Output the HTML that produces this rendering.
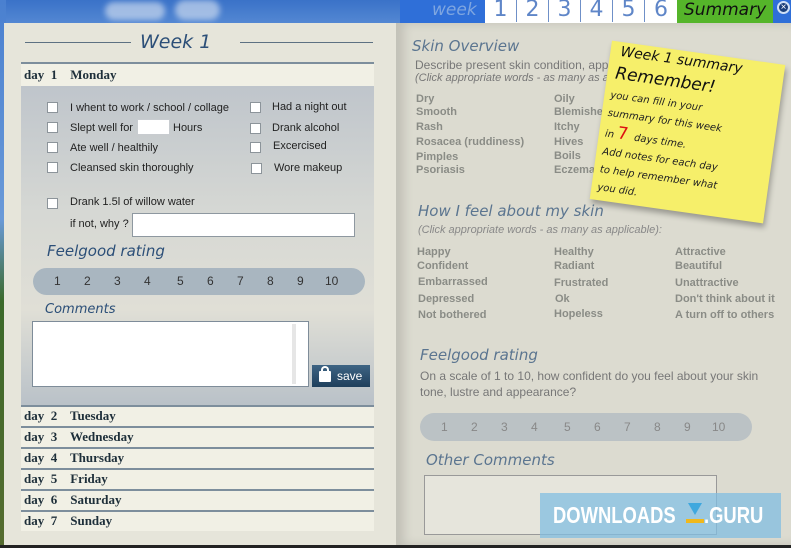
<!DOCTYPE html>
<html><head><meta charset="utf-8"><style>
*{margin:0;padding:0;box-sizing:border-box}
body{width:791px;height:548px;overflow:hidden;position:relative;font-family:"Liberation Sans",sans-serif;background:#2a2a2a}
.a{position:absolute}
.hand{font-family:"DejaVu Sans",sans-serif;font-style:italic;color:#2c4f78}
.sf{font-family:"Liberation Serif",serif;font-weight:bold;color:#1e2f3a;font-size:13px}
.cb{position:absolute;width:11px;height:11px;background:#fff;border:1px solid #8c949a}
.lt{position:absolute;font-size:11px;color:#222}
.w{position:absolute;font-size:11px;font-weight:bold;color:#8a8c86}
.row{position:absolute;left:21px;width:353px;height:21px;background:#f1f0e5;border-top:2px solid #7d8e9c}
.row span{position:absolute;top:1px}
</style></head><body>
<div class="a" style="left:0;top:0;width:791px;height:30px;background:linear-gradient(#3a72c8,#5b8ed6)"></div>
<div class="a" style="left:0;top:0;width:6px;height:548px;background:linear-gradient(#4a80d0,#6a9ad8 40%,#3b6a2a 55%,#556b2f)"></div>
<div class="a" style="left:105px;top:2px;width:60px;height:18px;background:#dfe8f4;border-radius:10px;opacity:.6;filter:blur(3px)"></div>
<div class="a" style="left:175px;top:0;width:45px;height:20px;background:#dfe8f4;border-radius:10px;opacity:.6;filter:blur(3px)"></div>
<!-- book -->
<div class="a" style="left:4px;top:23px;width:392px;height:522px;background:#e6e5da"></div>
<div class="a" style="left:396px;top:23px;width:395px;height:522px;background:#dcdbd0;box-shadow:inset 8px 0 10px rgba(0,0,0,.12)"></div>
<div class="a" style="left:0;top:545px;width:791px;height:3px;background:#222"></div>
<!-- tabs -->
<div class="a" style="left:400px;top:0;width:391px;height:23px;background:#2f6fd8"></div>
<div class="a hand" style="left:432px;top:0;font-size:17px;color:#7fa6e0">week</div>
<div class="a" style="left:485px;top:0;width:192px;height:23px;background:#fff"></div>
<div class="a hand" style="left:485px;top:-3px;width:192px;font-size:22px;font-style:normal;color:#5f86c8;display:flex">
<span style="width:32px;text-align:center;border-right:1px solid #6f90c8">1</span><span style="width:32px;text-align:center;border-right:1px solid #6f90c8">2</span><span style="width:32px;text-align:center;border-right:1px solid #6f90c8">3</span><span style="width:32px;text-align:center;border-right:1px solid #6f90c8">4</span><span style="width:32px;text-align:center;border-right:1px solid #6f90c8">5</span><span style="width:32px;text-align:center">6</span></div>
<div class="a" style="left:677px;top:0;width:96px;height:23px;background:#55b52a"></div>
<div class="a hand" style="left:684px;top:0;font-size:17px;color:#111">Summary</div>
<div class="a" style="left:777px;top:1px;width:13px;height:13px;border-radius:50%;background:#1a3f7a;border:2px solid #cfe0f5;color:#fff;font-size:10px;line-height:9px;text-align:center">×</div>
<!-- left page -->
<div class="a" style="left:25px;top:42px;width:106px;height:1px;background:#5d7182"></div>
<div class="a" style="left:240px;top:42px;width:133px;height:1px;background:#5d7182"></div>
<div class="a hand" style="left:140px;top:31px;font-size:19px">Week 1</div>
<div class="a" style="left:21px;top:62px;width:353px;height:24px;background:#f1f0e5;border-top:2px solid #7d8e9c"></div>
<div class="a sf" style="left:24px;top:67px">day&nbsp; 1&nbsp;&nbsp;&nbsp; Monday</div>
<div class="a" style="left:21px;top:86px;width:353px;height:320px;background:linear-gradient(#bfc5cb,#d6d8d4 40%,#e0dfd6 70%,#b9c1c8)"></div>
<div class="cb" style="left:47px;top:102px"></div><div class="lt" style="left:70px;top:102px">I whent to work / school / collage</div>
<div class="cb" style="left:47px;top:122px"></div><div class="lt" style="left:70px;top:122px">Slept well for</div>
<div class="a" style="left:137px;top:119px;width:33px;height:16px;background:#fff;border:1px solid #c8ccd0"></div><div class="lt" style="left:173px;top:122px">Hours</div>
<div class="cb" style="left:47px;top:142px"></div><div class="lt" style="left:70px;top:142px">Ate well / healthily</div>
<div class="cb" style="left:47px;top:162px"></div><div class="lt" style="left:70px;top:162px">Cleansed skin thoroughly</div>
<div class="cb" style="left:250px;top:102px"></div><div class="lt" style="left:272px;top:101px">Had a night out</div>
<div class="cb" style="left:250px;top:123px"></div><div class="lt" style="left:272px;top:122px">Drank alcohol</div>
<div class="cb" style="left:250px;top:142px"></div><div class="lt" style="left:273px;top:140px">Excercised</div>
<div class="cb" style="left:251px;top:163px"></div><div class="lt" style="left:274px;top:162px">Wore makeup</div>
<div class="cb" style="left:47px;top:198px"></div><div class="lt" style="left:70px;top:196px">Drank 1.5l of willow water</div>
<div class="lt" style="left:70px;top:218px">if not, why ?</div>
<div class="a" style="left:132px;top:213px;width:223px;height:24px;background:#fff;border:1px solid #8e98a0"></div>
<div class="a hand" style="left:47px;top:242px;font-size:15px">Feelgood rating</div>
<div class="a" style="left:33px;top:268px;width:332px;height:27px;border-radius:14px;background:#a9b6c0"></div>
<div class="a" style="left:33px;top:274px;width:332px;font-size:12px;color:#333"><span class="a" style="left:21px">1</span><span class="a" style="left:51px">2</span><span class="a" style="left:81px">3</span><span class="a" style="left:111px">4</span><span class="a" style="left:144px">5</span><span class="a" style="left:174px">6</span><span class="a" style="left:204px">7</span><span class="a" style="left:234px">8</span><span class="a" style="left:264px">9</span><span class="a" style="left:292px">10</span></div>
<div class="a hand" style="left:45px;top:302px;font-size:13px">Comments</div>
<div class="a" style="left:32px;top:321px;width:277px;height:66px;background:#fff;border:1px solid #7e8c99"></div>
<div class="a" style="left:292px;top:324px;width:4px;height:60px;background:#e6e6e6"></div>
<div class="a" style="left:312px;top:365px;width:58px;height:22px;background:linear-gradient(#3e6484,#1f3f5c)"></div>
<div class="a" style="left:319px;top:371px;width:12px;height:11px;background:#fff;border-radius:1px"></div>
<div class="a" style="left:321px;top:366px;width:8px;height:8px;border:2px solid #fff;border-bottom:none;border-radius:4px 4px 0 0"></div>
<div class="a" style="left:337px;top:369px;color:#fff;font-size:12px">save</div>
<div class="row" style="top:405px"><span class="sf" style="left:3px">day&nbsp; 2&nbsp;&nbsp;&nbsp; Tuesday</span></div>
<div class="row" style="top:426px"><span class="sf" style="left:3px">day&nbsp; 3&nbsp;&nbsp;&nbsp; Wednesday</span></div>
<div class="row" style="top:447px"><span class="sf" style="left:3px">day&nbsp; 4&nbsp;&nbsp;&nbsp; Thursday</span></div>
<div class="row" style="top:468px"><span class="sf" style="left:3px">day&nbsp; 5&nbsp;&nbsp;&nbsp; Friday</span></div>
<div class="row" style="top:489px"><span class="sf" style="left:3px">day&nbsp; 6&nbsp;&nbsp;&nbsp; Saturday</span></div>
<div class="row" style="top:510px;height:21px"><span class="sf" style="left:3px">day&nbsp; 7&nbsp;&nbsp;&nbsp; Sunday</span></div>
<!-- right page -->
<div class="a hand" style="left:412px;top:37px;font-size:15px;color:#5b7590">Skin Overview</div>
<div class="a" style="left:415px;top:58px;font-size:12px;color:#777">Describe present skin condition, appearance and problem areas:</div>
<div class="a" style="left:415px;top:72px;font-size:11px;font-style:italic;color:#777">(Click appropriate words - as many as applicable):</div>
<div class="w" style="left:416px;top:93px">Dry</div><div class="w" style="left:416px;top:106px">Smooth</div><div class="w" style="left:416px;top:121px">Rash</div><div class="w" style="left:416px;top:136px">Rosacea (ruddiness)</div><div class="w" style="left:416px;top:151px">Pimples</div><div class="w" style="left:416px;top:164px">Psoriasis</div>
<div class="w" style="left:554px;top:93px">Oily</div><div class="w" style="left:554px;top:106px">Blemishes</div><div class="w" style="left:554px;top:121px">Itchy</div><div class="w" style="left:554px;top:136px">Hives</div><div class="w" style="left:554px;top:150px">Boils</div><div class="w" style="left:554px;top:164px">Eczema</div>
<div class="a hand" style="left:418px;top:202px;font-size:15px;color:#5b7590">How I feel about my skin</div>
<div class="a" style="left:418px;top:224px;font-size:11px;font-style:italic;color:#888">(Click appropriate words - as many as applicable):</div>
<div class="w" style="left:417px;top:246px">Happy</div><div class="w" style="left:417px;top:260px">Confident</div><div class="w" style="left:418px;top:276px">Embarrassed</div><div class="w" style="left:418px;top:293px">Depressed</div><div class="w" style="left:418px;top:309px">Not bothered</div>
<div class="w" style="left:554px;top:246px">Healthy</div><div class="w" style="left:554px;top:260px">Radiant</div><div class="w" style="left:554px;top:277px">Frustrated</div><div class="w" style="left:555px;top:293px">Ok</div><div class="w" style="left:554px;top:308px">Hopeless</div>
<div class="w" style="left:675px;top:246px">Attractive</div><div class="w" style="left:675px;top:260px">Beautiful</div><div class="w" style="left:675px;top:277px">Unattractive</div><div class="w" style="left:675px;top:293px">Don't think about it</div><div class="w" style="left:675px;top:309px">A turn off to others</div>
<div class="a hand" style="left:420px;top:346px;font-size:15px;color:#5b7590">Feelgood rating</div>
<div class="a" style="left:420px;top:368px;font-size:12px;color:#777;line-height:16px">On a scale of 1 to 10, how confident do you feel about your skin<br>tone, lustre and appearance?</div>
<div class="a" style="left:420px;top:413px;width:332px;height:28px;border-radius:14px;background:#bbc2c5"></div>
<div class="a" style="left:420px;top:420px;font-size:12px;color:#888;width:332px"><span class="a" style="left:21px">1</span><span class="a" style="left:51px">2</span><span class="a" style="left:81px">3</span><span class="a" style="left:111px">4</span><span class="a" style="left:144px">5</span><span class="a" style="left:174px">6</span><span class="a" style="left:204px">7</span><span class="a" style="left:234px">8</span><span class="a" style="left:264px">9</span><span class="a" style="left:292px">10</span></div>
<div class="a hand" style="left:426px;top:451px;font-size:15px;color:#5b7590">Other Comments</div>
<div class="a" style="left:424px;top:475px;width:293px;height:60px;background:#e6e5dc;border:1px solid #999"></div>
<!-- sticky -->
<div class="a" style="left:600px;top:52px;width:175px;height:160px;background:#f6ef6a;transform:rotate(8deg);box-shadow:2px 4px 6px rgba(0,0,0,.3)">
<div class="hand" style="position:absolute;left:10px;top:2px;font-size:14px;color:#111;line-height:16px">Week 1 summary</div>
<div class="hand" style="position:absolute;left:8px;top:22px;font-size:17px;color:#111">Remember!</div>
<div class="hand" style="position:absolute;left:6px;top:46px;font-size:10px;color:#222;line-height:18px">you can fill in your<br>summary for this week<br>in <span style="color:#d11;font-size:17px;font-style:normal">7</span> &nbsp;days time.<br>Add notes for each day<br>to help remember what<br>you did.</div>
</div>
<!-- watermark -->
<div class="a" style="left:540px;top:493px;width:241px;height:45px;background:rgba(130,190,225,.75)"></div>
<div class="a" style="left:553px;top:502px;font-size:23px;font-weight:bold;color:#fff;transform:scaleX(.8);transform-origin:left">DOWNLOADS</div>
<div class="a" style="left:688px;top:503px;width:0;height:0;border-left:7px solid transparent;border-right:7px solid transparent;border-top:12px solid #3fa8de"></div>
<div class="a" style="left:686px;top:519px;width:18px;height:4px;background:#f0b81c"></div>
<div class="a" style="left:704px;top:502px;font-size:23px;font-weight:bold;color:#fff;transform:scaleX(.8);transform-origin:left">.GURU</div>
</body></html>
